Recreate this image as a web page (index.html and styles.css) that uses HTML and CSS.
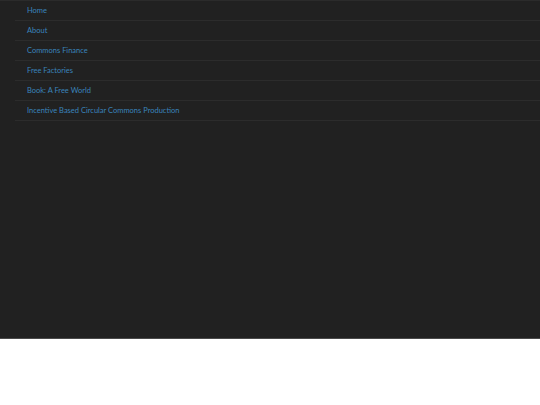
FILE: index.html
```html
<!DOCTYPE html>
<html>
<head>
<meta charset="utf-8">
<link rel="stylesheet" href="styles.css">
</head>
<body>
<div class="panel">
  <ul class="menu">
    <li class="item"><a href="#">Home</a></li>
    <li class="item"><a href="#">About</a></li>
    <li class="item"><a href="#">Commons Finance</a></li>
    <li class="item"><a href="#">Free Factories</a></li>
    <li class="item"><a href="#">Book: A Free World</a></li>
    <li class="item"><a href="#">Incentive Based Circular Commons Production</a></li>
  </ul>
</div>
</body>
</html>
```
FILE: styles.css
```css
html, body {
  margin: 0;
  padding: 0;
  background: #ffffff;
}
.panel {
  height: 339px;
  background: #212121;
  border-top: 1px solid #2b2b2b;
  border-bottom: 1px solid #4a4a4a;
  box-sizing: border-box;
}
.menu {
  list-style: none;
  margin: 0 0 0 15px;
  padding: 0;
}
.item {
  height: 19px;
  border-bottom: 1px solid #2c2c2c;
  display: flex;
  align-items: center;
  padding-left: 12px;
}
.item a {
  font-family: Lato, sans-serif;
  font-size: 7.5px;
  line-height: 10px;
  margin-top: 0;
  color: #3a84bc;
  text-decoration: none;
}
```
